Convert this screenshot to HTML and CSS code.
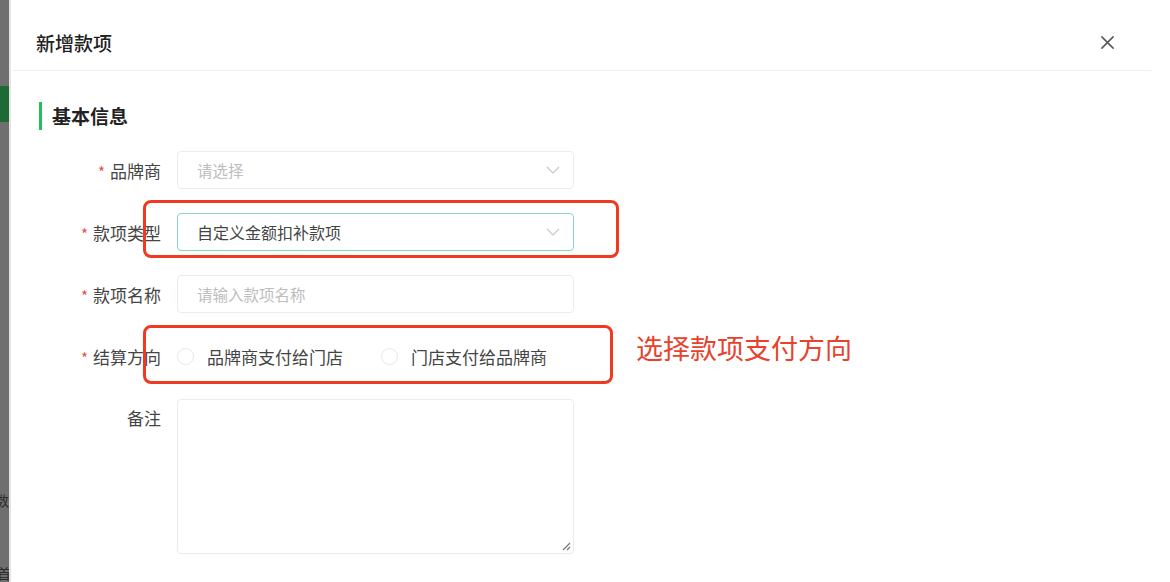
FILE: index.html
```html
<!DOCTYPE html>
<html lang="zh-CN">
<head>
    <meta charset="UTF-8">
    <title>新增款项</title>
    <link rel="stylesheet" href="styles.css">
</head>
<body>
    <div id="page">
        <div id="side-strip">
            <div class="strip-active"></div>
            <span class="strip-char strip-char-1">数</span>
            <span class="strip-char strip-char-2">首</span>
        </div>

        <div id="dialog">
            <div class="dialog-header">
                <h1 class="dialog-title">新增款项</h1>
                <svg class="dialog-close" width="16" height="16" viewBox="0 0 16 16">
                    <path d="M2 2 L14 14 M14 2 L2 14" stroke="#555" stroke-width="1.6" fill="none" stroke-linecap="round"/>
                </svg>
            </div>

            <div class="dialog-body">
                <h2 class="section-title">基本信息</h2>

                <div class="form-item">
                    <label class="form-label"><span class="req">*</span>品牌商</label>
                    <div class="select-box">
                        <span class="placeholder">请选择</span>
                        <svg class="chevron" width="14" height="8" viewBox="0 0 14 8"><path d="M1 1 L7 7 L13 1" stroke="#c8c8c8" stroke-width="1.2" fill="none"/></svg>
                    </div>
                </div>

                <div class="form-item">
                    <label class="form-label"><span class="req">*</span>款项类型</label>
                    <div class="select-box select-active">
                        <span class="value">自定义金额扣补款项</span>
                        <svg class="chevron" width="14" height="8" viewBox="0 0 14 8"><path d="M1 1 L7 7 L13 1" stroke="#c8c8c8" stroke-width="1.2" fill="none"/></svg>
                    </div>
                    <div class="mark-box mark-box-type"></div>
                </div>

                <div class="form-item">
                    <label class="form-label"><span class="req">*</span>款项名称</label>
                    <div class="select-box">
                        <span class="placeholder">请输入款项名称</span>
                    </div>
                </div>

                <div class="form-item">
                    <label class="form-label"><span class="req">*</span>结算方向</label>
                    <div class="radio-group">
                        <span class="radio"><i class="radio-dot"></i>品牌商支付给门店</span>
                        <span class="radio"><i class="radio-dot"></i>门店支付给品牌商</span>
                    </div>
                    <div class="mark-box mark-box-dir"></div>
                    <span class="mark-note">选择款项支付方向</span>
                </div>

                <div class="form-item form-item-top">
                    <label class="form-label">备注</label>
                    <div class="textarea-box">
                        <svg class="resize-handle" width="10" height="10" viewBox="0 0 10 10"><path d="M9 2 L2 9 M9 6 L6 9" stroke="#777" stroke-width="1.2"/></svg>
                    </div>
                </div>
            </div>
        </div>
    </div>
</body>
</html>
```

FILE: styles.css
```css
body {
    margin: 0;
    background-color: #fff;
    font-family: "Noto Sans CJK SC", "Noto Sans", sans-serif;
    color: #444;
}
#page {
    display: flex;
    width: 1170px;
    height: 582px;
    overflow: hidden;
}
#side-strip {
    position: relative;
    width: 9px;
    flex-shrink: 0;
    background-color: #6f6f6f;
    border-right: 2px solid #e4e4e4;
    overflow: hidden;
}
.strip-active {
    margin-top: 86px;
    height: 36px;
    background-color: #1e6a37;
}
.strip-char {
    position: absolute;
    font-size: 14px;
    color: #2a2a2a;
    line-height: 1;
}
.strip-char-1 {
    top: 493px;
    left: -5px;
}
.strip-char-2 {
    top: 566px;
    left: -3px;
}
#dialog {
    flex: 1;
    display: flex;
    flex-direction: column;
}
.dialog-header {
    height: 71px;
    box-sizing: border-box;
    margin: 0 19px 0 1px;
    padding: 15px 36px 0 24px;
    display: flex;
    align-items: center;
    justify-content: space-between;
    border-bottom: 1px solid #f1f1f1;
}
.dialog-title {
    margin: 0;
    font-size: 19px;
    font-weight: 500;
    color: #222;
}
.dialog-close {
    width: 15px;
    height: 15px;
}
.dialog-body {
    padding: 31px 0 0 28px;
}
.section-title {
    margin: 0 0 21px 0;
    height: 28px;
    line-height: 28px;
    border-left: 3px solid #20c05c;
    padding-left: 10px;
    font-size: 19px;
    font-weight: 700;
    color: #222;
}
.form-item {
    position: relative;
    display: flex;
    align-items: center;
    height: 38px;
    margin-bottom: 24px;
}
.form-item-top {
    align-items: flex-start;
    height: auto;
}
.form-label {
    width: 122px;
    padding-right: 16px;
    text-align: right;
    font-size: 17px;
    color: #444;
    flex-shrink: 0;
}
.form-item-top .form-label {
    padding-top: 6px;
}
.req {
    color: #e8514a;
    margin-right: 5px;
    font-size: 15px;
}
.select-box {
    width: 397px;
    height: 38px;
    box-sizing: border-box;
    border: 1px solid #ebebeb;
    border-radius: 4px;
    display: flex;
    align-items: center;
    justify-content: space-between;
    padding: 0 13px 0 19px;
    font-size: 16px;
}
.select-active {
    border-color: #86d9b7;
}
.placeholder {
    color: #bdbdbd;
    font-size: 15.5px;
}
.value {
    color: #444;
}
.chevron {
    width: 14px;
    height: 8px;
}
.radio-group {
    display: flex;
    gap: 38px;
    font-size: 17px;
    color: #444;
}
.radio {
    display: flex;
    align-items: center;
}
.radio-dot {
    width: 15px;
    height: 15px;
    border: 1px solid #e8e8e8;
    border-radius: 50%;
    margin-right: 13px;
}
.textarea-box {
    position: relative;
    width: 397px;
    height: 155px;
    box-sizing: border-box;
    border: 1px solid #ebebeb;
    border-radius: 4px;
}
.resize-handle {
    position: absolute;
    right: 2px;
    bottom: 2px;
}
.mark-box {
    position: absolute;
    left: 104px;
    border: 3.5px solid #f03a1f;
    border-radius: 8px;
    box-sizing: border-box;
}
.mark-box-type {
    top: -13px;
    width: 476px;
    height: 58px;
}
.mark-box-dir {
    top: -12px;
    width: 470px;
    height: 59px;
}
.mark-note {
    position: absolute;
    left: 597px;
    top: -9px;
    font-size: 27px;
    color: #e8422d;
    white-space: nowrap;
}
```
